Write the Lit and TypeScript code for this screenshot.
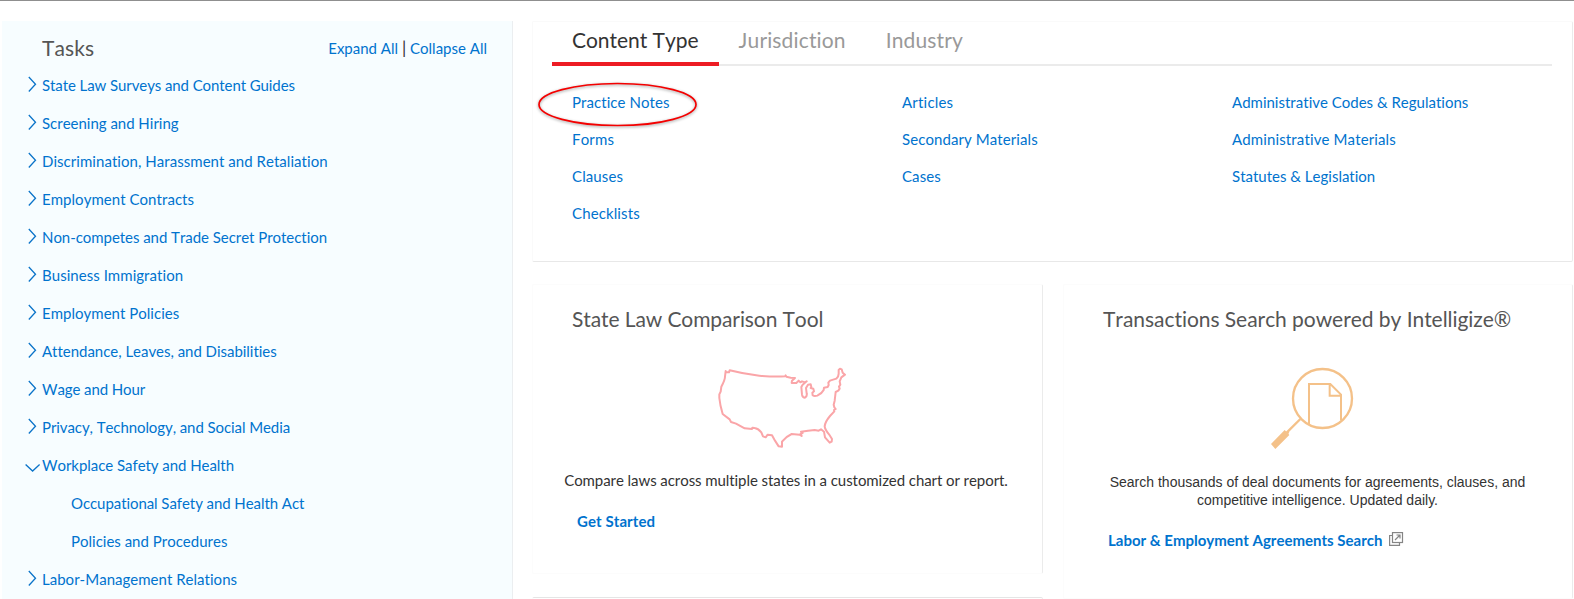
import { LitElement, html, css, svg } from "lit";
import { customElement } from "lit/decorators.js";
import { classMap } from "lit/directives/class-map.js";
import { styleMap } from "lit/directives/style-map.js";

// "track" is the letter spacing of a label in hundredths of a pixel.
interface Label { label: string; track?: number; }
interface Task extends Label { open?: boolean; children?: Label[]; }

const TASKS: Task[] = [
  { label: "State Law Surveys and Content Guides", track: -9 },
  { label: "Screening and Hiring", track: -2 },
  { label: "Discrimination, Harassment and Retaliation", track: 4 },
  { label: "Employment Contracts", track: 4 },
  { label: "Non-competes and Trade Secret Protection", track: -5 },
  { label: "Business Immigration", track: 4 },
  { label: "Employment Policies", track: 2 },
  { label: "Attendance, Leaves, and Disabilities", track: -3 },
  { label: "Wage and Hour", track: -10 },
  { label: "Privacy, Technology, and Social Media", track: -8 },
  {
    label: "Workplace Safety and Health", track: -5, open: true,
    children: [{ label: "Occupational Safety and Health Act", track: -7 }, { label: "Policies and Procedures" }],
  },
  { label: "Labor-Management Relations", track: 2 },
];

const TABS: Label[] = [{ label: "Content Type", track: -4 }, { label: "Jurisdiction", track: 15 }, { label: "Industry", track: 15 }];

const COLUMNS: Label[][] = [
  [{ label: "Practice Notes", track: 5 }, { label: "Forms", track: 15 }, { label: "Clauses", track: 12 }, { label: "Checklists", track: 12 }],
  [{ label: "Articles", track: 20 }, { label: "Secondary Materials", track: 8 }, { label: "Cases", track: 10 }],
  [{ label: "Administrative Codes & Regulations" }, { label: "Administrative Materials", track: 12 }, { label: "Statutes & Legislation" }],
];

const tracked = (l: Label) => html`<a style=${styleMap({ letterSpacing: `${(l.track ?? 0) / 100}px` })}>${l.label}</a>`;

@customElement("task-panel")
class TaskPanel extends LitElement {
  static styles = css`
    :host { display: block; background: #f7fdff; border-right: 1px solid #ebeef0; box-sizing: border-box; overflow: hidden; }
    .head { display: flex; justify-content: space-between; align-items: flex-start; padding: 12px 25px 0 40px; height: 45px; box-sizing: border-box; line-height: 30px; }
    .title { margin: 0; font-size: 21px; font-weight: 400; color: #555; letter-spacing: 0.1px; }
    .actions { font-size: 15px; color: #333; white-space: pre; }
    .bar { font-size: 17px; }
    a { color: #0073ce; text-decoration: none; }
    .row { display: flex; height: 38px; line-height: 38px; font-size: 15px; padding-left: 24px; white-space: nowrap; }
    .child { padding-left: 69px; }
    .chev { width: 16px; height: 38px; flex: none; overflow: visible; }
  `;
  chevron(open?: boolean) {
    return html`<svg class="chev" viewBox="0 0 16 38" fill="none" stroke="#0b74c9" stroke-width="1.3">
      ${open ? svg`<path d="M-.4 18.5 L6.6 25 L13.6 18.5"/>` : svg`<path d="M2.8 11 L9.5 18.2 L2.8 25.5"/>`}
    </svg>`;
  }
  render() {
    return html`
      <div class="head">
        <h2 class="title">Tasks</h2>
        <div class="actions"><a>Expand All</a> <span class="bar">|</span> <a>Collapse All</a></div>
      </div>
      ${TASKS.map((t) => html`
        <div class="row">${this.chevron(t.open)}${tracked(t)}</div>
        ${(t.children ?? []).map((c) => html`<div class="row child">${tracked(c)}</div>`)}
      `)}`;
  }
}

@customElement("content-panel")
class ContentPanel extends LitElement {
  static styles = css`
    :host { display: block; box-sizing: border-box; height: 241px; padding: 0 20px 0 19px; border: 1px solid #fafafa; border-right-color: #ebebeb; border-bottom: 1px solid #e8e8e8; border-radius: 2px; }
    .tabs { display: flex; height: 44px; box-sizing: border-box; border-bottom: 2px solid #ebebeb; font-size: 21px; line-height: 36px; color: #999; }
    .tab { padding: 0 20px; height: 44px; box-sizing: border-box; white-space: nowrap; }
    .tab a { color: inherit; }
    .active { color: #333; border-bottom: 4px solid #ed1c24; }
    .cols { display: grid; grid-template-columns: 330px 330px 1fr; padding: 18px 0 0 20px; }
    .cell { height: 37px; line-height: 37px; font-size: 15px; white-space: nowrap; }
    a { color: #0073ce; text-decoration: none; }
    .marked { position: relative; }
    .ring { position: absolute; left: -37px; top: -5px; width: 166px; height: 52px; overflow: visible; filter: drop-shadow(0 1px 1.5px rgba(0,0,0,.4)); }
  `;
  render() {
    return html`
      <div class="tabs">${TABS.map((t, i) => html`<div class=${classMap({ tab: true, active: i === 0 })}>${tracked(t)}</div>`)}</div>
      <div class="cols">${COLUMNS.map((col) => html`<div>${col.map((c) => html`
        <div class=${classMap({ cell: true, marked: c.label === "Practice Notes" })}>${tracked(c)}${c.label === "Practice Notes"
          ? html`<svg class="ring" viewBox="0 0 166 52"><ellipse cx="82.5" cy="25.5" rx="78.5" ry="21" fill="none" stroke="#f40000" stroke-width="1.7"/></svg>` : null}</div>`)}</div>`)}
      </div>`;
  }
}

@customElement("tool-cards")
class ToolCards extends LitElement {
  static styles = css`
    :host { display: flex; gap: 20px; align-items: flex-start; }
    .left { width: 511px; }
    .card { box-sizing: border-box; border: 1px solid #fcfcfc; border-right-color: #ebebeb; border-radius: 2px; }
    .compare { height: 290px; padding-top: 16px; }
    .deals { width: 510px; height: 315px; padding-top: 16px; }
    .next { height: 20px; margin-top: 23px; border-top-color: #e5e5e5; }
    .name { margin: 0; font-size: 21px; font-weight: 400; line-height: 36px; color: #555; white-space: nowrap; padding-left: 39px; }
    .compare .name { letter-spacing: -0.1px; }
    .deals .name { letter-spacing: -0.05px; }
    .art { display: block; }
    .map { margin: 13px 0 0 157px; width: 180px; height: 110px; }
    .lens { margin: 13px 0 0 186px; width: 130px; height: 110px; }
    .text { margin: 0; color: #333; font-size: 15px; line-height: 20px; white-space: nowrap; text-align: center; }
    .compare .text { margin-top: 10px; padding-right: 3px; letter-spacing: -0.07px; }
    .deals .text { margin-top: 13px; padding-right: 1px; font: 14px/18px "Liberation Sans", Arial, sans-serif; }
    a { color: #0073ce; text-decoration: none; font-weight: 700; font-size: 15px; line-height: 20px; }
    .compare a { letter-spacing: 0.08px; }
    .link { display: flex; margin-top: 21px; padding-left: 44px; white-space: nowrap; }
    .ext { width: 15px; height: 15px; margin: 2px 0 0 7px; }
  `;
  render() {
    return html`
      <div class="left">
        <section class="card compare">
          <h2 class="name">State Law Comparison Tool</h2>
          <svg class="art map" viewBox="0 0 540 330" fill="none" stroke="#faa5a8" stroke-width="6" stroke-linejoin="round" stroke-linecap="round">
            <path d="M107 63 L108 67 L117 67 L119 61 Q160 72 208 77 Q250 81 286 79 L287 76 L289 80 L302 83 L315 84 L306 92 L305 99 L319 99 L326 92 L331 97 L336 94 L345 97 L350 94 L338 104 L334 111 L336 134 Q338 143 345 143 Q352 139 350 130 L348 114 L354 104 L362 103 L364 111 L362 114 L370 116 L372 124 L367 128 L368 136 Q373 140 382 137 Q396 130 401 120 L402 113 L413 111 L416 105 L415 98 L420 92 L439 86 L444 80 L446 71 L446 60 L450 56 L455 58 L458 68 L465 74 L454 82 L449 94 L451 104 L447 110 L449 116 L445 122 L437 126 L434 152 L431 164 L433 172 L437 177 L432 180 L433 184 L420 198 Q405 216 404 229 Q405 239 417 253 L426 267 L425 275 L419 278 L405 262 L402 245 L393 238 L386 242 L374 240 L354 242 L333 245 L338 249 L332 251 L335 258 L329 254 L305 252 Q289 259 276 275 L276 290 L266 289 L255 272 L246 256 L233 254 L227 262 L219 259 L214 247 Q204 235 194 234 L187 233 L186 237 L164 235 L138 221 L123 216 L119 208 L98 192 Q90 165 88 144 L88 133 L92 125 L94 110 Q105 89 105 80 L107 63 Z"/>
          </svg>
          <p class="text">Compare laws across multiple states in a customized chart or report.</p>
          <div class="link"><a>Get Started</a></div>
        </section>
        <section class="card next"></section>
      </div>
      <section class="card deals">
        <h2 class="name">Transactions Search powered by Intelligize®</h2>
        <svg class="art lens" viewBox="0 0 390 330" fill="none" stroke="#f4c189" stroke-width="7">
          <circle cx="217.5" cy="145.5" r="88.5"/>
          <path d="M177 223 V102 H241 L273 134 V211 M239 102 V137 H273" stroke-width="6"/>
          <path d="M151 207 L110 248"/>
          <path d="M63 282 L104 240 L110 246 L113 243 L118 248 L115 251 L118 255 L76 297 Z" fill="#f4c189" stroke="none"/>
        </svg>
        <p class="text">Search thousands of deal documents for agreements, clauses, and<br>competitive intelligence. Updated daily.</p>
        <div class="link"><a>Labor &amp; Employment Agreements Search</a>
          <svg class="ext" viewBox="0 0 15 15" fill="none" stroke="#858585" stroke-width="1.2"><path d="M3.5 3.5 H.6 V13.4 H10.5 V10.5"/><rect x="3.5" y=".6" width="10" height="9.9"/><path d="M6 8 L11 3 M7.5 3 H11 V6.5"/></svg>
        </div>
      </section>`;
  }
}

@customElement("app-root")
class AppRoot extends LitElement {
  static styles = css`
    :host { display: block; height: 599px; overflow: hidden; box-sizing: border-box; background: #fff; border-top: 1px solid #8f8f8f; font-family: Lato, sans-serif; font-kerning: none; font-variant-ligatures: none; }
    .page { display: flex; gap: 19px; padding: 20px 0 0 2px; }
    .tasks { width: 511px; height: 578px; flex: none; }
    .main { width: 1041px; flex: none; }
    .cards { margin-top: 22px; }
  `;
  render() {
    return html`<div class="page">
      <task-panel class="tasks"></task-panel>
      <main class="main"><content-panel></content-panel><tool-cards class="cards"></tool-cards></main>
    </div>`;
  }
}
